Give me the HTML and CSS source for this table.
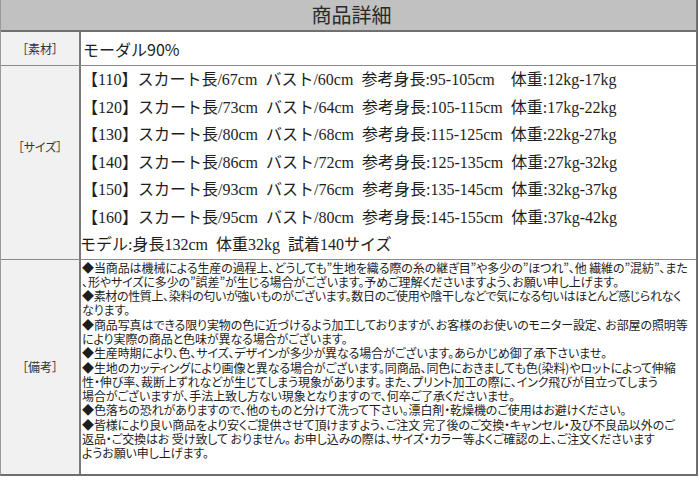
FILE: index.html
```html
<!DOCTYPE html>
<html lang="ja">
<head>
<meta charset="utf-8">
<title>商品詳細</title>
<link rel="stylesheet" href="styles.css">
</head>
<body>
<div class="sheet">
  <div class="head">商品詳細</div>
  <div class="row row-material">
    <div class="label">［素材］</div>
    <div class="cell material">モーダル90%</div>
  </div>
  <div class="row row-size">
    <div class="label label-size">［サイズ］</div>
    <div class="cell sizes">
      <div class="line">【110】スカート長/67cm バスト/60cm 参考身長:95-105cm  体重:12kg-17kg</div>
      <div class="line">【120】スカート長/73cm バスト/64cm 参考身長:105-115cm 体重:17kg-22kg</div>
      <div class="line">【130】スカート長/80cm バスト/68cm 参考身長:115-125cm 体重:22kg-27kg</div>
      <div class="line">【140】スカート長/86cm バスト/72cm 参考身長:125-135cm 体重:27kg-32kg</div>
      <div class="line">【150】スカート長/93cm バスト/76cm 参考身長:135-145cm 体重:32kg-37kg</div>
      <div class="line">【160】スカート長/95cm バスト/80cm 参考身長:145-155cm 体重:37kg-42kg</div>
      <div class="line model">モデル:身長132cm 体重32kg 試着140サイズ</div>
    </div>
  </div>
  <div class="row row-notes">
    <div class="label">［備考］</div>
    <div class="cell notes">
      <div class="nline">◆当商品は機械による生産の過程上、どうしても”生地を織る際の糸の継ぎ目”や多少の”ほつれ”、他 繊維の”混紡”、また</div>
      <div class="nline">、形やサイズに多少の”誤差”が生じる場合がございます。予めご理解くださいますよう、お願い申し上げます。</div>
      <div class="nline tight">◆素材の性質上、染料の匂いが強いものがございます。数日のご使用や陰干しなどで気になる匂いはほとんど感じられなく</div>
      <div class="nline">なります。</div>
      <div class="nline">◆商品写真はできる限り実物の色に近づけるよう加工しておりますが、お客様のお使いのモニター設定、 お部屋の照明等</div>
      <div class="nline">により実際の商品と色味が異なる場合がございます。</div>
      <div class="nline">◆生産時期により、色、サイズ、デザインが多少が異なる場合がございます。あらかじめ御了承下さいませ。</div>
      <div class="nline">◆生地のカッティングにより画像と異なる場合がございます。同商品、同色におきましても色(染料)やロットによって伸縮</div>
      <div class="nline">性・伸び率、裁断上ずれなどが生じてしまう現象があります。 また、プリント加工の際に、インク飛びが目立ってしまう</div>
      <div class="nline">場合がございますが、手法上致し方ない現象となりますので、何卒ご了承くださいませ。</div>
      <div class="nline">◆色落ちの恐れがありますので、他のものと分けて洗って下さい。漂白剤・乾燥機のご使用はお避けください。</div>
      <div class="nline">◆皆様により良い商品をより安くご提供させて頂けますよう、ご注文 完了後のご交換・キャンセル・及び不良品以外のご</div>
      <div class="nline">返品・ご交換はお 受け致して おりません。 お申し込みの際は、サイズ・カラー等よくご確認の上、ご注文くださいます</div>
      <div class="nline">ようお願い申し上げます。</div>
    </div>
  </div>
</div>
</body>
</html>
```
FILE: styles.css
```css
html, body {
  margin: 0;
  padding: 0;
  background: #fff;
}

body {
  font-family: "Noto Sans CJK JP", sans-serif;
  color: #222;
}

.sheet {
  width: 695px;
  border-left: 1px solid #9a9a9a;
  border-right: 2px solid #6e6e6e;
  border-bottom: 2px solid #6e6e6e;
}

.head {
  background: #c1c1c1;
  border-bottom: 2px solid #707070;
  box-sizing: border-box;
  height: 32px;
  display: flex;
  align-items: center;
  justify-content: center;
  font-size: 20px;
  color: #2a2a2a;
  padding-left: 6px;
  padding-bottom: 1px;
}

.row {
  display: grid;
  grid-template-columns: 78px 1fr;
  border-bottom: 1px solid #8a8a8a;
}

.row-notes {
  border-bottom: none;
}

.label {
  background: #f1f1f1;
  display: flex;
  align-items: center;
  justify-content: center;
  font-size: 12px;
  color: #333;
  font-feature-settings: "palt";
}

.label-size {
  padding-bottom: 31px;
}

.cell {
  border-left: 2px solid #7a7a7a;
  padding-left: 1px;
  overflow: hidden;
}

.material {
  height: 33px;
  display: flex;
  align-items: center;
  font-size: 16px;
  padding-left: 2px;
  padding-top: 1px;
  box-sizing: border-box;
  white-space: nowrap;
}

.sizes {
  font-family: "Liberation Serif", "Noto Sans CJK JP", serif;
  font-size: 16px;
  line-height: 27.5px;
  word-spacing: 4px;
  color: #1e1e1e;
}

.line {
  white-space: pre;
  height: 27.5px;
}

.model {
  margin-left: -2px;
}

.notes {
  height: 214px;
  box-sizing: border-box;
  padding-top: 1px;
  font-size: 12px;
  line-height: 14.3px;
  letter-spacing: -0.1px;
  font-feature-settings: "palt";
  color: #1e1e1e;
}

.nline {
  white-space: nowrap;
  height: 14.3px;
}

.tight {
  letter-spacing: -0.35px;
}
```
